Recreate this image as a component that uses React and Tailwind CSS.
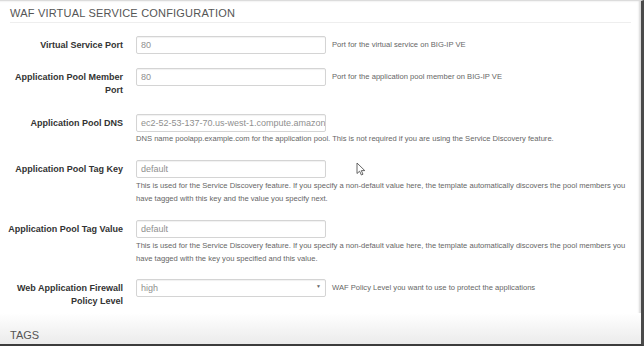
import React from "react";

const font = { fontFamily: '"Liberation Sans", Arial, sans-serif' };

function Field({ children }) {
  return (
    <div className="h-[18px] w-[190px] border border-[#d4d4d4] rounded-[2px] bg-white shadow-[inset_0_1px_1px_rgba(0,0,0,0.06)] pl-[4px] text-[9px] leading-[16px] text-[#8f8f8f] overflow-hidden whitespace-nowrap">
      {children}
    </div>
  );
}

function Help({ children }) {
  return <div className="text-[7.6px] leading-[13px] text-[#666]">{children}</div>;
}

function Row({ label, height, children }) {
  return (
    <div className="flex" style={{ height }}>
      <div className="w-[123px] shrink-0 text-right font-bold text-[9px] leading-[13px] text-[#333] pt-[3px]">
        {label}
      </div>
      <div className="ml-[13px] flex-1">{children}</div>
    </div>
  );
}

function Cursor() {
  return (
    <svg className="absolute left-[356px] top-[161px]" width="10" height="14" viewBox="0 0 10 14">
      <path d="M1 1 L1 11.5 L3.6 9.2 L5.4 13 L7 12.2 L5.3 8.6 L8.8 8.6 Z" fill="#fff" stroke="#555" strokeWidth="0.9" strokeLinejoin="round" />
    </svg>
  );
}

export default function App() {
  return (
    <div className="w-[644px] h-[348px] bg-white overflow-hidden" style={font}>
      <div className="relative w-[644px] h-[346px] border-t border-[#dcdcdc] border-r-[3px] border-r-[#4a4a4a] border-b-[2px] border-b-[#3c3c3c] shadow-[inset_-2px_0_2px_rgba(0,0,0,0.15)] flex flex-col">
        <div className="ml-[10px] mr-[10px] h-[22px] pt-[5px] border-b border-[#eeeeee] text-[11px] leading-[14px] text-[#555] tracking-[0.2px]">
          WAF VIRTUAL SERVICE CONFIGURATION
        </div>

        <div className="mt-[13px]">
          <Row label="Virtual Service Port" height={32}>
            <div className="flex items-center">
              <Field>80</Field>
              <span className="ml-[6px] text-[7.6px] text-[#666]">Port for the virtual service on BIG-IP VE</span>
            </div>
          </Row>
          <Row label={<>Application Pool Member<br />Port</>} height={46}>
            <div className="flex items-center">
              <Field>80</Field>
              <span className="ml-[6px] text-[7.6px] text-[#666]">Port for the application pool member on BIG-IP VE</span>
            </div>
          </Row>
          <Row label="Application Pool DNS" height={46}>
            <Field>ec2-52-53-137-70.us-west-1.compute.amazon</Field>
            <Help>
              DNS name poolapp.example.com for the application pool. This is not required if you are using the Service Discovery feature.
            </Help>
          </Row>
          <Row label="Application Pool Tag Key" height={60}>
            <Field>default</Field>
            <div className="mt-[1px]">
              <Help>
                This is used for the Service Discovery feature. If you specify a non-default value here, the template automatically discovers the pool members you
                <br />
                have tagged with this key and the value you specify next.
              </Help>
            </div>
          </Row>
          <Row label="Application Pool Tag Value" height={59}>
            <Field>default</Field>
            <div className="mt-[1px]">
              <Help>
                This is used for the Service Discovery feature. If you specify a non-default value here, the template automatically discovers the pool members you
                <br />
                have tagged with the key you specified and this value.
              </Help>
            </div>
          </Row>
          <Row label={<>Web Application Firewall<br />Policy Level</>} height={34}>
            <div className="flex items-center">
              <div className="relative">
                <Field>high</Field>
                <span className="absolute right-[5px] top-[4px] text-[5px] text-[#666]">▼</span>
              </div>
              <span className="ml-[6px] text-[7.6px] text-[#666]">WAF Policy Level you want to use to protect the applications</span>
            </div>
          </Row>
        </div>

        <div className="flex-1 bg-gradient-to-b from-white to-[#ebebeb] px-[10px] pt-[15px] text-[11px] leading-[14px] text-[#555]">
          TAGS
        </div>

        <Cursor />
      </div>
    </div>
  );
}
